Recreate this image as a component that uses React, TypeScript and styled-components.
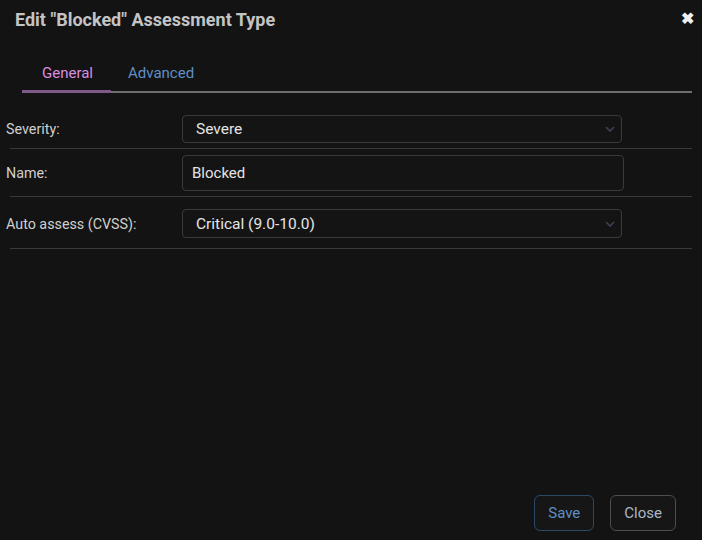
import * as React from "react";
import styled, {createGlobalStyle} from "styled-components";

const Global = createGlobalStyle`
  html, body {
    margin: 0;
    padding: 0;
    background: #131313;
  }
  body {
    font-family: Roboto, "Liberation Sans", sans-serif;
  }
`;

const Dialog = styled.div`
  width: 702px;
  height: 540px;
  background: #131313;
  display: flex;
  flex-direction: column;
  box-sizing: border-box;
`;

const Header = styled.div`
  display: flex;
  align-items: center;
  justify-content: space-between;
  height: 38px;
  padding: 0 8px 0 15px;
`;

const Title = styled.h1`
  margin: 0;
  font-size: 18px;
  font-weight: 700;
  color: #c4c4c4;
`;

const CloseX = styled.span`
  color: #f0f0f0;
  font-size: 16px;
  font-weight: 700;
  line-height: 1;
  cursor: pointer;
`;

const TabBar = styled.div`
  display: flex;
  margin: 22px 10px 0 22px;
  border-bottom: 2px solid #6f6f6f;
`;

const Tab = styled.div<{ $active?: boolean }>`
  padding: 4px 18px 11px 20px;
  font-size: 15px;
  color: ${p => (p.$active ? "#d98ee0" : "#5f8fc4")};
  box-shadow: ${p => (p.$active ? "inset 0 -3px 0 #7e5a89" : "none")};
  margin-bottom: -2px;
  ${p => !p.$active && "padding-left: 17px;"}
`;

const Form = styled.div`
  display: flex;
  flex-direction: column;
  padding: 22px 10px 0 6px;
`;

const Row = styled.div<{ $pt?: number; $pb?: number }>`
  display: grid;
  grid-template-columns: 176px 1fr;
  align-items: center;
  padding: ${p => p.$pt ?? 0}px 0 ${p => p.$pb ?? 6}px 0;
  margin-bottom: 6px;
  position: relative;
  &::after {
    content: "";
    position: absolute;
    left: 4px;
    right: 0;
    bottom: 0;
    height: 1px;
    background: #3a3a3a;
  }
`;

const Label = styled.label`
  font-size: 14.3px;
  color: #cfcfcf;
`;

const SelectBox = styled.div<{ $h: number }>`
  width: 440px;
  height: ${p => p.$h}px;
  box-sizing: border-box;
  border: 1px solid #3a3a3a;
  border-radius: 4px;
  display: flex;
  align-items: center;
  justify-content: space-between;
  padding: 0 6px 0 13px;
  font-size: 15.5px;
  color: #e4e4e4;
  background: #141414;
`;

const Input = styled.div`
  width: 442px;
  height: 36px;
  box-sizing: border-box;
  border: 1px solid #3a3a3a;
  border-radius: 4px;
  display: flex;
  align-items: center;
  padding: 0 9px;
  font-size: 15px;
  color: #e4e4e4;
  background: #141414;
`;

const Footer = styled.div`
  margin-top: auto;
  display: flex;
  justify-content: flex-end;
  gap: 16px;
  padding: 0 26px 9px 0;
`;

const Button = styled.button<{ $primary?: boolean }>`
  height: 36px;
  padding: 0 13px;
  border-radius: 6px;
  background: #161616;
  border: 1px solid ${p => (p.$primary ? "#2c4a66" : "#4e4e4e")};
  color: ${p => (p.$primary ? "#5f8fc4" : "#a9b8c8")};
  font-family: Roboto, "Liberation Sans", sans-serif;
  font-size: 15px;
`;

const Chevron = () => (
  <svg width="10" height="6" viewBox="0 0 10 6">
    <path d="M1 1l4 4 4-4" fill="none" stroke="#3b4250" strokeWidth="1.6"/>
  </svg>
);

export default function App() {
  return (
    <Dialog>
      <Global/>
      <Header>
        <Title>Edit "Blocked" Assessment Type</Title>
        <CloseX>✖</CloseX>
      </Header>
      <TabBar>
        <Tab $active>General</Tab>
        <Tab>Advanced</Tab>
      </TabBar>
      <Form>
        <Row>
          <Label>Severity:</Label>
          <SelectBox $h={28}>Severe<Chevron/></SelectBox>
        </Row>
        <Row>
          <Label>Name:</Label>
          <Input>Blocked</Input>
        </Row>
        <Row $pt={6} $pb={11}>
          <Label>Auto assess (CVSS):</Label>
          <SelectBox $h={29}>Critical (9.0-10.0)<Chevron/></SelectBox>
        </Row>
      </Form>
      <Footer>
        <Button $primary>Save</Button>
        <Button>Close</Button>
      </Footer>
    </Dialog>
  );
}
